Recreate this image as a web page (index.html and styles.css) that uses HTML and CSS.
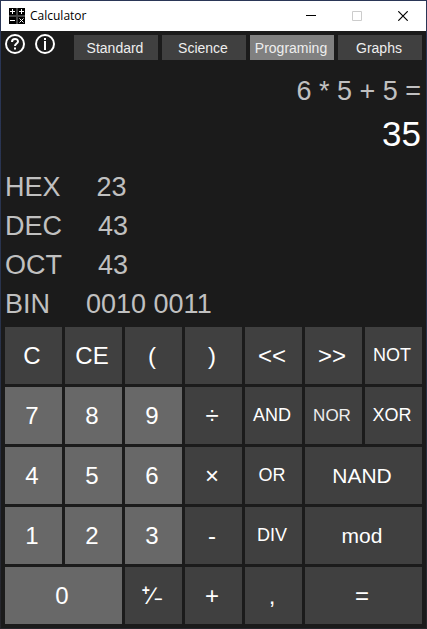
FILE: index.html
```html
<!DOCTYPE html>
<html lang="en">
<head>
<meta charset="utf-8">
<meta name="viewport" content="width=device-width, initial-scale=1">
<title>Calculator</title>
<link rel="stylesheet" href="styles.css">
</head>
<body>
<div class="window">
  <header class="titlebar">
    <svg class="app-icon" viewBox="0 0 16 16" aria-hidden="true" shape-rendering="crispEdges">
      <rect width="16" height="16" fill="#444"/>
      <path d="M0 0h7v7H0zM9 0h7v7H9zM0 9h7v7H0zM9 9h7v7H9z" fill="#000"/>
      <path d="M1 3h5v1H1zM3 1h1v5H3zM10 3h5v1h-5zM12 1h1v5h-1zM1 12h5v1H1z" fill="#fff"/>
      <path d="M10.500 10.500l4 4m0-4l-4 4" stroke="#fff" shape-rendering="auto"/>
    </svg>
    <h1 class="title">Calculator</h1>
    <button class="caption" type="button" aria-label="Minimize"><svg viewBox="0 0 10 10"><path d="M0 4.500h10" stroke="#000"/></svg></button>
    <button class="caption" type="button" aria-label="Maximize" disabled><svg viewBox="0 0 10 10"><path d="M.5.5h9v9h-9z" fill="none" stroke="#ccc"/></svg></button>
    <button class="caption" type="button" aria-label="Close"><svg viewBox="0 0 10 10"><path d="M.3.3l9.400 9.400m0-9.400l-9.400 9.400" stroke="#000" stroke-width="1.200"/></svg></button>
  </header>
  <main>
    <div class="toolbar">
      <button class="round" type="button" aria-label="Help">
        <svg viewBox="0 0 20 20" fill="none" stroke="#fff" stroke-width="2"><circle cx="10" cy="10" r="9"/><path d="M7 8c0-4 6-4 6-.5C13 9.500 10 9.500 10 12"/><path d="M10 13.500v2"/></svg>
      </button>
      <button class="round" type="button" aria-label="About">
        <svg viewBox="0 0 20 20" fill="none" stroke="#fff" stroke-width="2"><circle cx="10" cy="10" r="9"/><path d="M10 4v2M10 7v9"/></svg>
      </button>
      <nav class="tabs">
        <button type="button">Standard</button>
        <button type="button">Science</button>
        <button type="button" class="active" aria-current="page">Programing</button>
        <button type="button">Graphs</button>
      </nav>
    </div>
    <section class="display">
      <div class="expression">6 * 5 + 5 =</div>
      <output class="result">35</output>
    </section>
    <dl class="bases">
      <div><dt>HEX</dt><dd>23</dd></div>
      <div><dt>DEC</dt><dd>43</dd></div>
      <div><dt>OCT</dt><dd>43</dd></div>
      <div><dt>BIN</dt><dd>0010 0011</dd></div>
    </dl>
    <section class="keypad">
      <button type="button">C</button>
      <button type="button">CE</button>
      <button type="button">(</button>
      <button type="button">)</button>
      <button type="button">&lt;&lt;</button>
      <button type="button">&gt;&gt;</button>
      <button type="button" class="word">NOT</button>

      <button type="button" class="digit">7</button>
      <button type="button" class="digit">8</button>
      <button type="button" class="digit">9</button>
      <button type="button">÷</button>
      <button type="button" class="word">AND</button>
      <button type="button" class="word small">NOR</button>
      <button type="button" class="word">XOR</button>

      <button type="button" class="digit">4</button>
      <button type="button" class="digit">5</button>
      <button type="button" class="digit">6</button>
      <button type="button">×</button>
      <button type="button" class="word">OR</button>
      <button type="button" class="wide long">NAND</button>

      <button type="button" class="digit">1</button>
      <button type="button" class="digit">2</button>
      <button type="button" class="digit">3</button>
      <button type="button">-</button>
      <button type="button" class="word">DIV</button>
      <button type="button" class="wide long">mod</button>

      <button type="button" class="digit wide">0</button>
      <button type="button" class="sign" aria-label="Change sign"><sup>+</sup><span>∕</span><sub>−</sub></button>
      <button type="button">+</button>
      <button type="button">,</button>
      <button type="button" class="wide">=</button>
    </section>
  </main>
</div>
</body>
</html>
```
FILE: styles.css
```css
* { box-sizing: border-box; }

body {
  margin: 0;
  padding: 1px;
  min-height: 100vh;
  display: flex;
  background: linear-gradient(#2a3657, #29334c 50%, #26262b);
  font-family: "Liberation Sans", Arial, sans-serif;
}

button {
  margin: 0;
  padding: 0;
  border: 0;
  background: none;
  color: #fff;
  font-family: inherit;
}

svg { display: block; }

.window {
  flex: 1;
  min-width: 0;
  background: #1b1b1b;
}

.titlebar {
  display: flex;
  align-items: center;
  height: 30px;
  padding-left: 8px;
  background: #fff;
}

.app-icon { width: 16px; height: 16px; }

.title {
  flex: 1;
  margin: 0 0 0 5px;
  font: 400 12px/16px "Open Sans", "Noto Sans", sans-serif;
  color: #000;
}

.caption {
  display: flex;
  align-items: center;
  justify-content: center;
  width: 46px;
  height: 30px;
}

.caption svg { width: 10px; height: 10px; }

.toolbar {
  display: flex;
  align-items: flex-start;
  gap: 10px;
  padding: 3px 4px 0;
}

.round svg { width: 20px; height: 20px; }

.tabs {
  flex: 1;
  display: grid;
  grid-template-columns: repeat(4, 1fr);
  gap: 4px;
  margin: 1px 0 0 9px;
}

.tabs button {
  height: 25px;
  padding-right: 2px;
  background: #404040;
  color: #eee;
  font-size: 14px;
}

.tabs .active { background: #808080; }

.display {
  padding: 12px 5px;
  text-align: right;
}

.expression {
  font-size: 27px;
  line-height: 39px;
  color: #c0c0c0;
}

.result {
  display: block;
  font-size: 35px;
  line-height: 45px;
  color: #fff;
}

.bases {
  margin: 0;
  padding: 0 4px;
  font-size: 27px;
  line-height: 39px;
  color: #c0c0c0;
}

.bases div { display: flex; gap: 36px; }

.bases dd { margin: 0; }

.keypad {
  display: grid;
  grid-template-columns: repeat(7, minmax(0, 1fr));
  grid-auto-rows: 57px;
  gap: 3px;
  padding: 3px 4px 4px;
}

.keypad button {
  padding-right: 3px;
  background: #404040;
  font-size: 24px;
}

.keypad .digit { background: #686868; }
.keypad .wide { grid-column: span 2; }
.keypad .word { font-size: 18px; }
.keypad .small { font-size: 17px; color: #eee; }
.keypad .long { font-size: 21px; }

.sign sup,
.sign sub {
  font-size: 14px;
  font-weight: 700;
  line-height: 0;
}

.sign sub { vertical-align: baseline; }
```
